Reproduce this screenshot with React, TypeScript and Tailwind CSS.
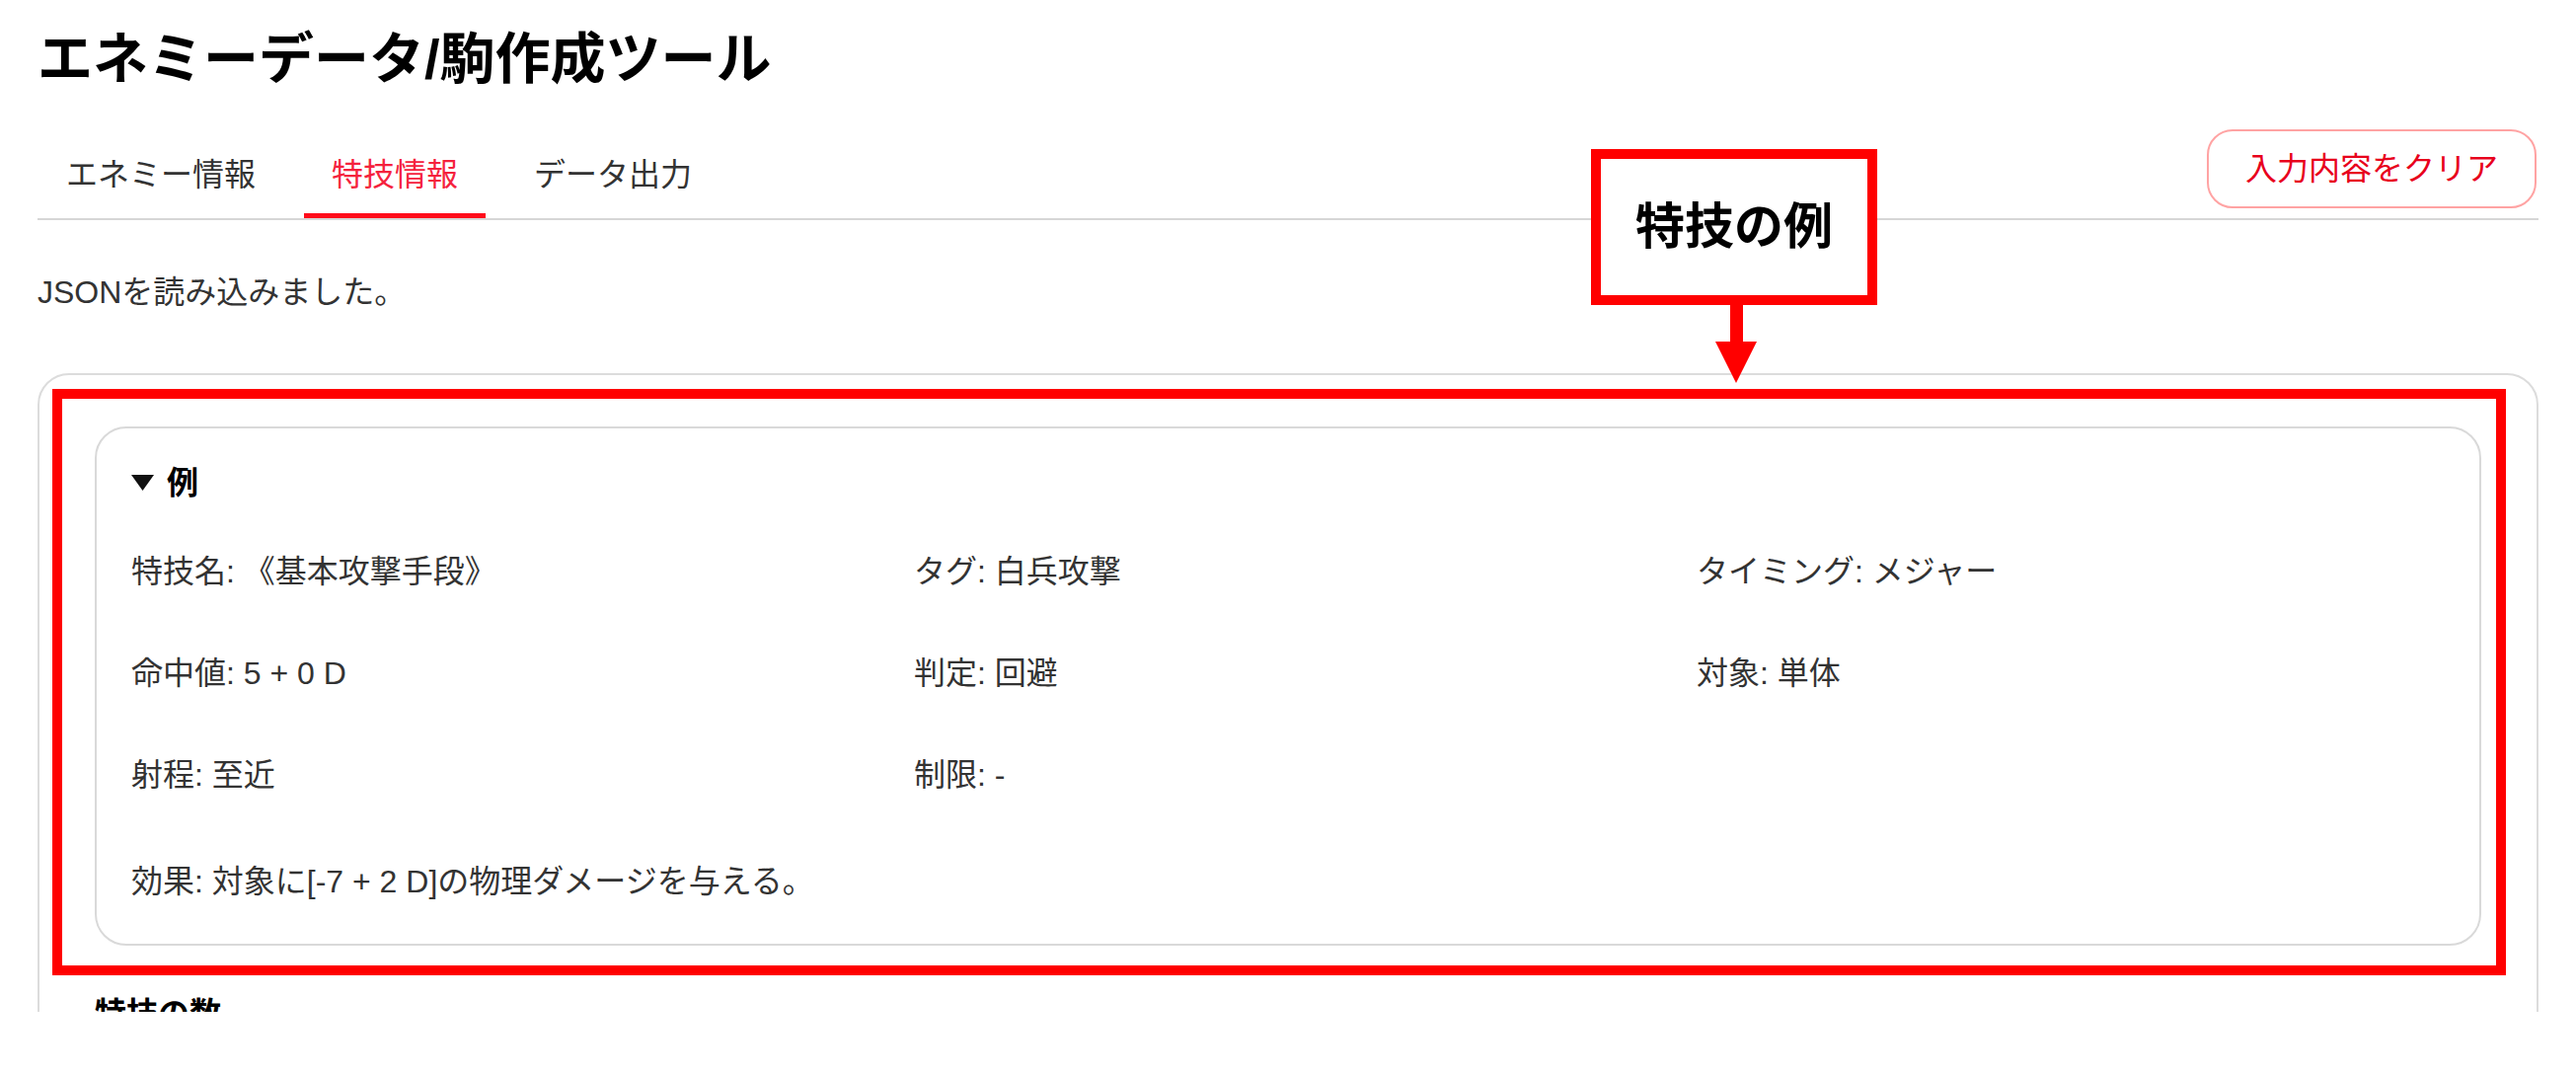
import React from "react";

const font = "font-['Liberation_Sans','Noto_Sans_CJK_JP',sans-serif]";

const tabs = ["エネミー情報", "特技情報", "データ出力"];

const fields = [
  ["特技名", "《基本攻撃手段》"],
  ["タグ", "白兵攻撃"],
  ["タイミング", "メジャー"],
  ["命中値", "5 + 0 D"],
  ["判定", "回避"],
  ["対象", "単体"],
  ["射程", "至近"],
  ["制限", "-"],
];

const Field = ({ label, value }: { label: string; value: string }) => (
  <div className="text-[32px] leading-[32px]">
    {label}: {value}
  </div>
);

const Annotation = () => (
  <>
    <div className="absolute left-[1612px] top-[151px] w-[290px] h-[158px] border-[10px] border-[#ff0000] bg-white flex items-center justify-center">
      <span className="text-[50px] font-bold text-black leading-none">特技の例</span>
    </div>
    <div className="absolute left-[1753px] top-[309px] w-[13px] h-[40px] bg-[#ff0000]" />
    <svg className="absolute left-[1738px] top-[346px]" width="42" height="42" viewBox="0 0 42 42">
      <polygon points="0,0 42,0 21,42" fill="#ff0000" />
    </svg>
    <div className="absolute left-[53px] top-[394px] w-[2486px] h-[594px] border-[10px] border-[#ff0000]" />
  </>
);

export default function App() {
  const active = 1;
  return (
    <div className={`${font} bg-white text-[#333] w-[2610px] h-[1089px]`}>
      <div className="relative h-[1025px] overflow-hidden px-[38px]">
        <h1 className="pt-[32px] text-[56px] leading-[56px] font-bold text-black">
          エネミーデータ/駒作成ツール
        </h1>

        <div className="mt-[43px] flex items-end justify-between border-b-2 border-[#d6d6d6]">
          <div className="flex gap-[20px]">
            {tabs.map((t, i) => (
              <div
                key={t}
                className={
                  i === active
                    ? "px-[28px] pb-[23px] text-[32px] leading-[32px] text-[#f5223d] border-b-[5px] border-[#ff0a1a]"
                    : "px-[29px] pb-[23px] text-[32px] leading-[32px] text-[#333] border-b-[5px] border-transparent"
                }
              >
                {t}
              </div>
            ))}
          </div>
          <button className="mb-[10px] mr-[2px] h-[80px] px-[37px] rounded-[26px] border-2 border-[#ffa3a3] text-[32px] leading-[32px] text-[#e8001c] bg-white">
            入力内容をクリア
          </button>
        </div>

        <p className="mt-[57px] text-[32px] leading-[32px]">JSONを読み込みました。</p>

        <div className="mt-[66px] border-2 border-[#dcdcdc] rounded-[32px] px-[56px] pt-[52px] pb-[60px]">
          <div className="border-2 border-[#d9d9d9] rounded-[32px] pl-[35px] pr-[35px] pt-[39px] pb-[47px]">
            <div className="flex items-center gap-[13px] text-[32px] leading-[32px] font-bold text-black">
              <svg width="23" height="16" viewBox="0 0 23 16">
                <polygon points="0,0 23,0 11.5,16" fill="#111" />
              </svg>
              <span>例</span>
            </div>
            <div className="mt-[58px] grid grid-cols-3 gap-x-[35px] gap-y-[71px]">
              {fields.map(([l, v]) => (
                <Field key={l} label={l} value={v} />
              ))}
            </div>
            <div className="mt-[76px] text-[32px] leading-[32px]">
              効果: 対象に[-7 + 2 D]の物理ダメージを与える。
            </div>
          </div>
          <div className="mt-[53px] text-[32px] leading-[32px] font-bold text-black">特技の数</div>
        </div>

        <Annotation />
      </div>
    </div>
  );
}
